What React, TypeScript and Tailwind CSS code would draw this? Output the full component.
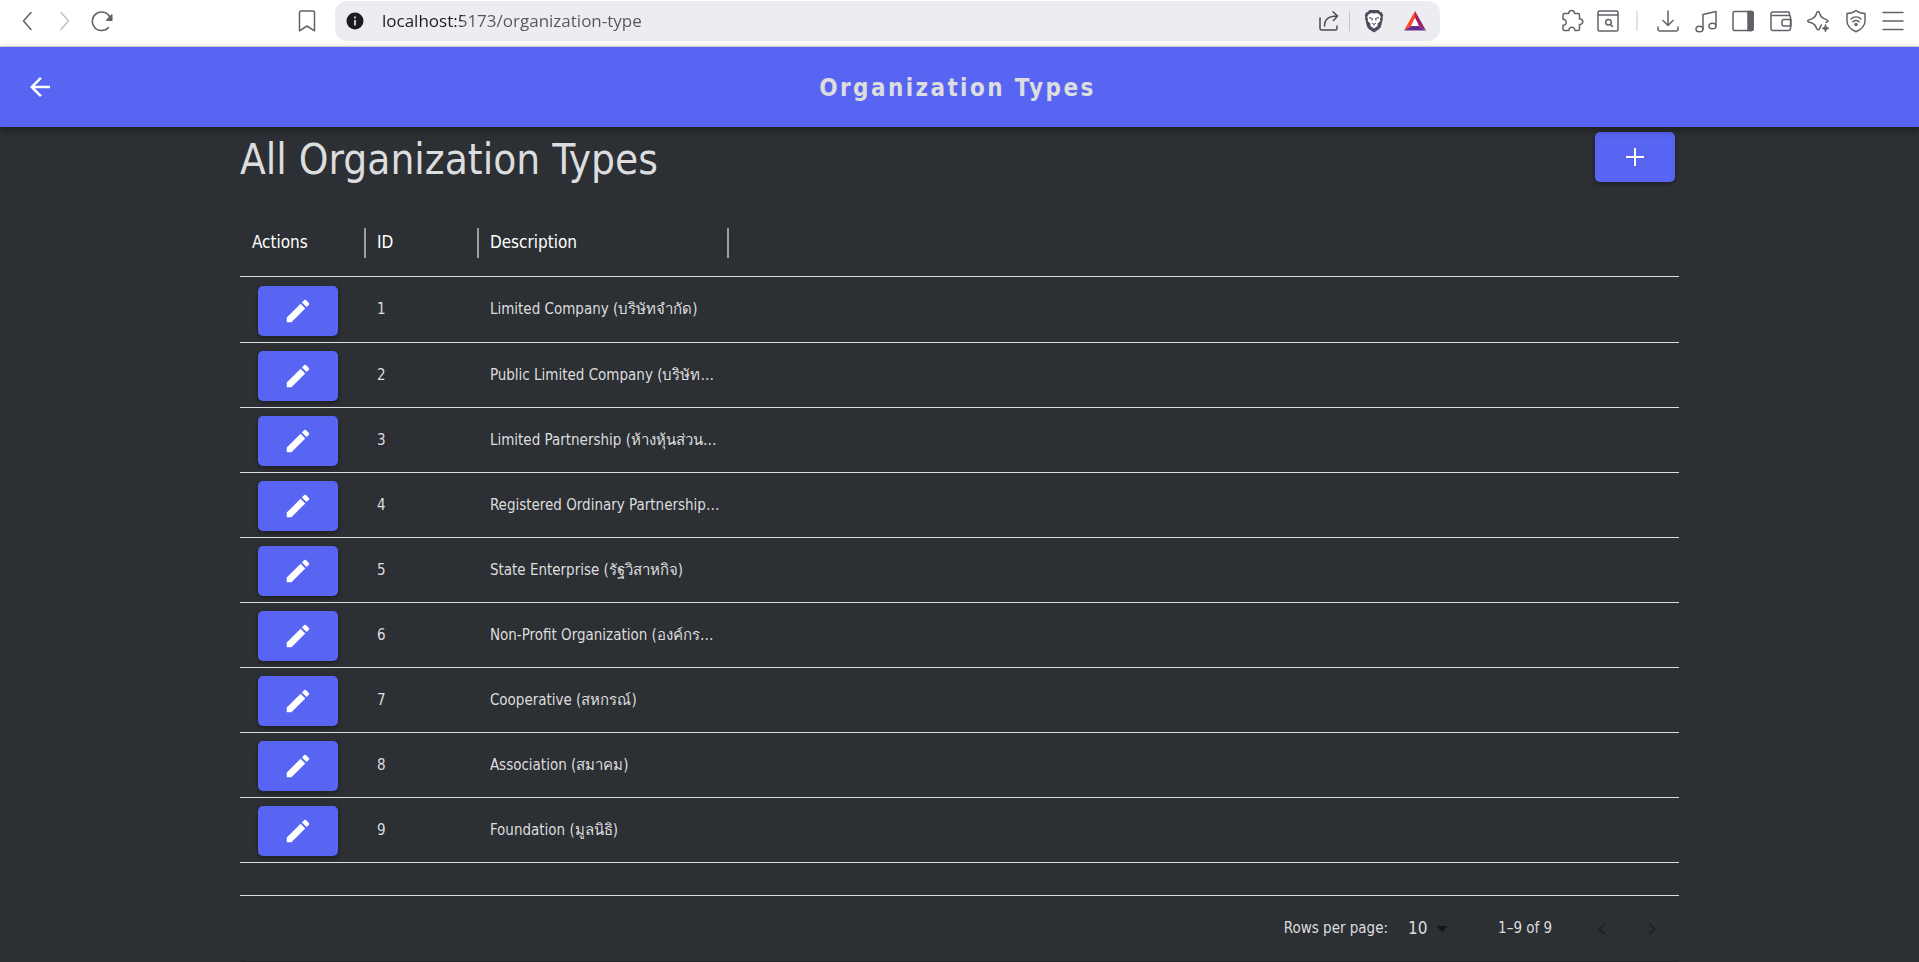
import React from "react";

const rows = [
  "Limited Company (บริษัทจำกัด)",
  "Public Limited Company (บริษัทมหาชนจำกัด)",
  "Limited Partnership (ห้างหุ้นส่วนจำกัด)",
  "Registered Ordinary Partnership (ห้างหุ้นส่วนสามัญนิติบุคคล)",
  "State Enterprise (รัฐวิสาหกิจ)",
  "Non-Profit Organization (องค์กรไม่แสวงหากำไร)",
  "Cooperative (สหกรณ์)",
  "Association (สมาคม)",
  "Foundation (มูลนิธิ)",
];

function LineIcon({ children }: { children: React.ReactNode }) {
  return (
    <svg
      viewBox="0 0 24 24"
      className="size-6 shrink-0"
      fill="none"
      stroke="currentColor"
      strokeWidth="1.5"
      strokeLinecap="round"
      strokeLinejoin="round"
      aria-hidden="true"
    >
      {children}
    </svg>
  );
}

function ToolButton({ label, children, className = "" }: { label: string; children: React.ReactNode; className?: string }) {
  return (
    <button type="button" aria-label={label} className={`flex size-6 shrink-0 items-center justify-center ${className}`}>
      {children}
    </button>
  );
}

function LionIcon() {
  return (
    <svg viewBox="0 0 20 24" className="h-6 w-5" aria-hidden="true">
      <path d="M5.500 1h9l1.800 2 1.700.4 1.200 3-.6 1.600.3 1.500-1.800 7.500c-.4 1.500-1.300 2.600-2.500 3.500L10 23.500l-4.600-3c-1.200-.9-2.100-2-2.500-3.500L1.100 9.500 1.400 8 .8 6.400l1.200-3L3.700 3z" fill="#4c4c5e" />
      <path d="M10 4.500 7 4 4.500 5.500 3.200 8l.8 2-.3 2 2.600 2.600.2 2.400L10 19.500l3.500-2.500.2-2.400L16.300 12l-.3-2 .8-2-1.300-2.500L13 4z" fill="#fff" />
      <path d="m5 8.600 3.500.9-.6 2.200M15 8.600l-3.500.9.600 2.200M8 14l2 1.500 2-1.500M10 15.500v1.200" fill="none" stroke="#4c4c5e" strokeWidth="1" />
    </svg>
  );
}

function TriangleIcon() {
  return (
    <svg viewBox="0 0 22 20" className="h-5 w-[22px]" aria-hidden="true">
      <path d="M11 0 0 19.500 7.200 15 11 7z" fill="#ff4724" />
      <path d="m11 0 11 19.500-7.200-4.500L11 7z" fill="#9e1f63" />
      <path d="M0 19.500h22L14.800 15H7.200z" fill="#662d91" />
      <path d="m11 7 3.900 8H7.100z" fill="#fff" />
    </svg>
  );
}

function BrowserBar() {
  return (
    <div className="flex h-[47px] items-start border-b border-[#dcdce4] bg-white text-[#5f6368]">
      <div className="flex h-[42px] w-[335px] shrink-0 items-center pl-4">
        <ToolButton label="Back">
          <LineIcon><path d="M15 3.500 7.500 12l7.500 8.500" /></LineIcon>
        </ToolButton>
        <ToolButton label="Forward" className="ml-3 text-[#bfc1c4]">
          <LineIcon><path d="m9 3.500 7.500 8.500L9 20.500" /></LineIcon>
        </ToolButton>
        <ToolButton label="Reload" className="ml-3.5">
          <LineIcon>
            <path d="M20.500 9.500A9.300 9.300 0 1 0 18.500 18.500" />
            <path d="M21.800 6v5.200h-5z" fill="currentColor" />
          </LineIcon>
        </ToolButton>
        <ToolButton label="Bookmark" className="ml-auto mr-4">
          <LineIcon>
            <path d="M4.500 3.500A1.500 1.500 0 0 1 6 2h12a1.500 1.500 0 0 1 1.500 1.500v18.300L12 17l-7.500 4.800z" />
          </LineIcon>
        </ToolButton>
      </div>
      <div className="mt-px flex h-10 min-w-0 flex-1 items-center rounded-xl bg-[#ededf1] pr-3.5 pl-[11px]">
        <svg viewBox="0 0 18 18" className="size-[18px] shrink-0" aria-hidden="true">
          <circle cx="9" cy="9" r="8.500" fill="#1c1b1f" />
          <path d="M8 4.500h2v2H8zM8 8h2v5.500H8z" fill="#c8c8cc" />
        </svg>
        <input
          aria-label="Address"
          className="ml-[18px] min-w-0 flex-1 bg-[linear-gradient(90deg,#1c1b1f_80px,#55555e_80px)] bg-clip-text font-['Open_Sans',sans-serif] text-[17px] text-transparent outline-none"
          defaultValue="localhost:5173/organization-type"
        />
        <ToolButton label="Share" className="text-[#4a4a50]">
          <LineIcon>
            <path d="M3 9v10.500A1.500 1.500 0 0 0 4.500 21h14a1.500 1.500 0 0 0 1.500-1.500V17" />
            <path d="M7.500 17c0-6 3.500-10 12.500-10M16 2.800 20.500 7 16.500 11.500" />
          </LineIcon>
        </ToolButton>
        <span className="ml-2 h-5 w-px bg-[#c4c4cc]" />
        <button type="button" aria-label="Shields" className="ml-3.5"><LionIcon /></button>
        <button type="button" aria-label="Rewards" className="ml-5"><TriangleIcon /></button>
      </div>
      <div className="flex h-[42px] w-[479px] shrink-0 items-center justify-end pr-3.5">
        <ToolButton label="Extensions">
          <LineIcon>
            <path d="M4.500 4.500h4.200C8.600 2.800 9.800 1.500 11.600 1.500s3 1.300 2.900 3h3.500A1.500 1.500 0 0 1 19.500 6v4c1.900-.2 3.300 1 3.300 2.700s-1.400 2.900-3.300 2.700V20a1.500 1.500 0 0 1-1.500 1.500h-3.200c.1-1.900-1.200-3.200-3-3.200s-3.100 1.300-3 3.200H4.500A1.500 1.500 0 0 1 3 20v-3.700c1.900.1 3.200-1.200 3.200-3s-1.300-3.100-3.200-3V6a1.500 1.500 0 0 1 1.500-1.500z" />
          </LineIcon>
        </ToolButton>
        <ToolButton label="Search tabs" className="ml-3">
          <LineIcon>
            <rect x="2" y="2" width="20" height="20" rx="1.500" />
            <path d="M2 6h20M14.500 15.500l2 2" />
            <circle cx="12.500" cy="13.200" r="2.800" />
          </LineIcon>
        </ToolButton>
        <span className="ml-4 h-5 w-0.5 bg-[#e2e2ea]" />
        <div className="ml-[18px] flex w-[249px] items-center justify-between">
          <ToolButton label="Downloads">
            <LineIcon><path d="M12 2v14M7 11.500l5 5 5-5M2 18v2a2 2 0 0 0 2 2h16a2 2 0 0 0 2-2v-2" /></LineIcon>
          </ToolButton>
          <ToolButton label="Media">
            <LineIcon>
              <path d="M9 20V5.500L22 2.500V17" />
              <ellipse cx="5.500" cy="20" rx="3.500" ry="2.800" />
              <ellipse cx="18.500" cy="17" rx="3.500" ry="2.800" />
            </LineIcon>
          </ToolButton>
          <ToolButton label="Sidebar">
            <LineIcon>
              <rect x="2" y="2.500" width="20" height="19" rx="1.500" />
              <path d="M17 2.500h4a1 1 0 0 1 1 1v17a1 1 0 0 1-1 1h-4z" fill="currentColor" />
            </LineIcon>
          </ToolButton>
          <ToolButton label="Wallet">
            <LineIcon>
              <path d="M20.500 6.500V4.500A1.500 1.500 0 0 0 19 3H4a2 2 0 0 0-2 2v14.500a2 2 0 0 0 2 2h15.500a2 2 0 0 0 2-2V8a1.500 1.500 0 0 0-1.500-1.500H3.500" />
              <path d="M22 10.500h-7a2 2 0 0 0-2 2V15a2 2 0 0 0 2 2h7z" />
            </LineIcon>
          </ToolButton>
          <ToolButton label="Assistant">
            <LineIcon>
              <path d="M15.500 16c-.9.900-1.300 2-1.900 3.600-.6 1.400-2.500 1.400-3 0-1-3.600-2-4.700-5.400-5.800l-2.500-.8c-1.300-.5-1.300-1.600 0-2.100l2.500-.8c3.400-1.100 4.400-2.200 5.400-5.800.6-2.400 2.400-2.400 3 0 1 3.600 2 4.700 5.400 5.800l2 .8c1.300.5 1.300 1.600 0 2.100l-1 .4" />
              <path d="m19.500 15.500 1 2.800 2.500 1-2.500 1-1 2.700-1-2.700-2.500-1 2.500-1z" fill="currentColor" strokeWidth="0.800" />
            </LineIcon>
          </ToolButton>
          <ToolButton label="VPN">
            <LineIcon>
              <path d="M12 1.500c2.500 2 5.500 3 9 3V12c0 5.500-4 8.500-9 10.800C7 20.500 3 17.500 3 12V4.500c3.500 0 6.500-1 9-3z" />
              <path d="M7 10c3-2.700 7-2.700 10 0M8.800 12.800c2-1.600 4.400-1.600 6.400 0" />
              <circle cx="12" cy="15.500" r="1" fill="currentColor" />
            </LineIcon>
          </ToolButton>
          <ToolButton label="Menu">
            <LineIcon><path d="M2 3.500h20M2 12h20M2 20.500h20" /></LineIcon>
          </ToolButton>
        </div>
      </div>
    </div>
  );
}

function PrimaryButton({ label, children }: { label: string; children: React.ReactNode }) {
  return (
    <button
      type="button"
      aria-label={label}
      className="flex h-[50px] w-20 items-center justify-center rounded-[5px] bg-[#5865f2] text-white shadow-[0_2px_4px_rgba(0,0,0,0.35)]"
    >
      {children}
    </button>
  );
}

function HeaderCell({ children, className = "pl-[11px]" }: { children: React.ReactNode; className?: string }) {
  return (
    <th scope="col" className="p-0 text-left align-middle text-[17px] font-normal text-white">
      <div className={`flex h-[30px] items-center border-r-2 border-[#9e9fa1] ${className}`}>{children}</div>
    </th>
  );
}

export default function App() {
  return (
    <div className="min-h-screen bg-[#2c2f33] font-['DejaVu_Sans_Condensed','Noto_Sans',sans-serif] text-[#dcddde]">
      <BrowserBar />
      <header className="relative grid h-20 grid-cols-[80px_1fr_84px] items-center bg-[#5865f2] shadow-[0_3px_8px_rgba(0,0,0,0.4)]">
        <button type="button" aria-label="Go back" className="flex size-20 items-center justify-center text-white">
          <svg viewBox="0 0 24 24" className="size-[30px]" fill="currentColor" aria-hidden="true">
            <path d="M20 11H7.830l5.590-5.590L12 4l-8 8 8 8 1.410-1.410L7.830 13H20z" />
          </svg>
        </button>
        <h1 className="pt-0.5 text-center text-2xl font-bold tracking-widest">Organization Types</h1>
      </header>

      <main className="mx-auto w-3/4">
        <div className="flex h-[83px] items-start justify-between pt-[5px] pr-1">
          <h2 className="text-[42px] leading-[56px]">All Organization Types</h2>
          <PrimaryButton label="Add organization type">
            <svg viewBox="0 0 18 18" className="size-[18px]" fill="none" stroke="currentColor" strokeWidth="2" aria-hidden="true">
              <path d="M9 0v18M0 9h18" />
            </svg>
          </PrimaryButton>
        </div>

        <section className="rounded-b shadow-[0_1px_1px_rgba(0,0,0,0.3)]">
          <table className="w-full table-fixed border-separate border-spacing-0">
            <colgroup>
              <col className="w-[126px]" />
              <col className="w-[113px]" />
              <col className="w-[250px]" />
              <col />
            </colgroup>
            <thead>
              <tr className="h-[67px] [&>*]:border-b [&>*]:border-[#dcddde]">
                <HeaderCell className="pl-3">Actions</HeaderCell>
                <HeaderCell>ID</HeaderCell>
                <HeaderCell>Description</HeaderCell>
                <td />
              </tr>
            </thead>
            <tbody className="text-[15px]">
              {rows.map((description, index) => (
                <tr key={description} className="h-[65px] first:h-[66px] [&>td]:border-b [&>td]:border-[#dcddde]">
                  <td className="p-0 pb-[6px] pl-[18px] align-bottom">
                    <PrimaryButton label={`Edit ${description}`}>
                      <svg viewBox="0 0 24 24" className="size-[30px]" fill="currentColor" aria-hidden="true">
                        <path d="M3 17.250V21h3.750L17.810 9.940l-3.750-3.750zM20.710 7.040a1 1 0 0 0 0-1.410l-2.340-2.340a1 1 0 0 0-1.410 0l-1.830 1.830 3.750 3.750z" />
                      </svg>
                    </PrimaryButton>
                  </td>
                  <td className="p-0 pl-[11px]">{index + 1}</td>
                  <td className="truncate p-0 pr-2 pl-[11px]">{description}</td>
                  <td />
                </tr>
              ))}
            </tbody>
          </table>
          <div className="h-[33px] border-b border-[#dcddde]" />
          <div className="flex h-[65px] items-center justify-end pr-[15px] text-[15px]">
            <label htmlFor="rows-per-page">Rows per page:</label>
            <div className="relative ml-5 flex items-center">
              <select id="rows-per-page" defaultValue="10" className="w-10 appearance-none bg-transparent text-[17px] outline-none">
                <option value="5">5</option>
                <option value="10">10</option>
                <option value="25">25</option>
              </select>
              <svg viewBox="0 0 12 6" className="pointer-events-none absolute right-0 h-1.5 w-3" aria-hidden="true">
                <path d="M0 0h12L6 6z" fill="#151719" />
              </svg>
            </div>
            <span className="ml-[50px]">1–9 of 9</span>
            <div className="ml-[38px] flex gap-[26px] text-[#1f2124]">
              <button type="button" disabled aria-label="Previous page">
                <svg viewBox="0 0 24 24" className="size-6" fill="currentColor" aria-hidden="true">
                  <path d="M15.410 7.410 14 6l-6 6 6 6 1.410-1.410L10.830 12z" />
                </svg>
              </button>
              <button type="button" disabled aria-label="Next page">
                <svg viewBox="0 0 24 24" className="size-6" fill="currentColor" aria-hidden="true">
                  <path d="M8.590 16.590 10 18l6-6-6-6-1.410 1.410L13.170 12z" />
                </svg>
              </button>
            </div>
          </div>
        </section>
      </main>
    </div>
  );
}
